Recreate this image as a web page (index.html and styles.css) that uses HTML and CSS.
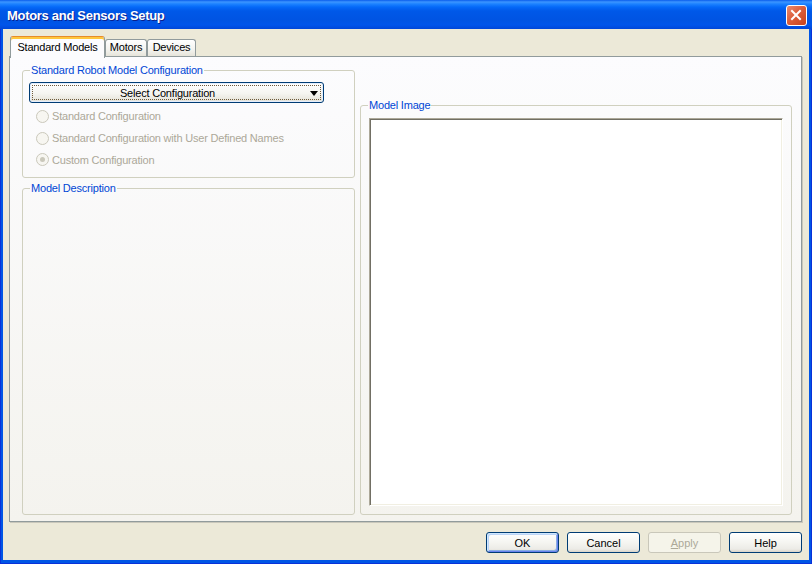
FILE: index.html
```html
<!DOCTYPE html>
<html lang="en">
<head>
  <meta charset="UTF-8" />
  <title>Motors and Sensors Setup</title>
  <link rel="stylesheet" href="styles.css">
</head>
<body>
  <div class="window">
    <div class="titlebar">
      <span class="title">Motors and Sensors Setup</span>
      <button class="close" aria-label="Close">
        <svg width="19" height="19" viewBox="0 0 19 19">
          <path d="M5 5 L13 13 M13 5 L5 13" stroke="#fff" stroke-width="2" stroke-linecap="square" fill="none" />
        </svg>
      </button>
    </div>

    <div class="frame">
      <div class="client">
        <div class="tabs">
          <div class="tab active tab-models">Standard Models</div>
          <div class="tab tab-motors">Motors</div>
          <div class="tab tab-devices">Devices</div>
        </div>

        <div class="panel">
          <div class="left-col">
            <fieldset class="group config">
              <legend>Standard Robot Model Configuration</legend>
              <div class="select">
                <span>Select Configuration</span>
                <span class="arrow"></span>
              </div>
              <div class="radios">
                <div class="radio"><span class="circle"></span>Standard Configuration</div>
                <div class="radio"><span class="circle"></span>Standard Configuration with User Defined Names</div>
                <div class="radio"><span class="circle checked"></span>Custom Configuration</div>
              </div>
            </fieldset>

            <fieldset class="group desc">
              <legend>Model Description</legend>
            </fieldset>
          </div>

          <div class="right-col">
            <fieldset class="group image">
              <legend>Model Image</legend>
              <div class="image-box"></div>
            </fieldset>
          </div>
        </div>

        <div class="buttons">
          <button class="btn default">OK</button>
          <button class="btn">Cancel</button>
          <button class="btn" disabled><u>A</u>pply</button>
          <button class="btn">Help</button>
        </div>
      </div>
    </div>
  </div>
</body>
</html>
```

FILE: styles.css
```css
* {
  box-sizing: border-box;
}
body {
  margin: 0;
  font-family: 'Liberation Sans', Arial, sans-serif;
  font-size: 11px;
  letter-spacing: -0.2px;
  color: #000;
  background: #fff;
}
.window {
  width: 812px;
  height: 564px;
  display: flex;
  flex-direction: column;
}

/* title bar */
.titlebar {
  height: 29px;
  display: flex;
  align-items: center;
  justify-content: space-between;
  padding: 2px 5px 0 7px;
  background: linear-gradient(#0a5dec 0, #3c95ff 2px, #1c82ff 4px, #0569f8 7px, #0058e8 11px, #0054e3 20px, #0055ea 25px, #0047d8 29px);
}
.title {
  color: #fff;
  font-weight: bold;
  font-size: 13px;
  letter-spacing: -0.3px;
  text-shadow: 1px 1px 0 #0a1e8c;
}
.close {
  width: 21px;
  height: 21px;
  padding: 0;
  border: 1px solid #fff;
  border-radius: 3px;
  background: linear-gradient(135deg, #e98a6e 0%, #dc5f3c 45%, #c8421c 100%);
  display: flex;
  align-items: center;
  justify-content: center;
}

/* frame + client area */
.frame {
  flex: 1;
  display: flex;
  padding: 0 3px 4px;
  background: #0055e5;
  box-shadow: inset 1px 0 0 #0831d9, inset -1px 0 0 #0831d9, inset 0 -1px 0 #0831d9;
}
.client {
  flex: 1;
  display: flex;
  flex-direction: column;
  background: #ece9d8;
  padding: 7px 7px 7px 6px;
}

/* tabs */
.tabs {
  display: flex;
  align-items: flex-end;
  height: 20px;
  padding-left: 1px;
  position: relative;
  z-index: 1;
}
.tab {
  height: 17px;
  line-height: 15px;
  text-align: center;
  border: 1px solid #919b9c;
  border-bottom: none;
  border-radius: 3px 3px 0 0;
  background: linear-gradient(#ffffff, #f3f3ef 60%, #e6e4da);
}
.tab.active {
  height: 22px;
  line-height: 20px;
  margin-bottom: -2px;
  background: #fcfcfe;
  border-top-color: #e68b2c;
  box-shadow: inset 0 2px 0 #ffc73c;
}
.tab-models {
  width: 95px;
}
.tab-motors {
  width: 42px;
}
.tab-devices {
  width: 49px;
}

.panel {
  width: 793px;
  height: 466px;
  border: 1px solid #919b9c;
  box-shadow: 1px 1px 0 #c9c7bb;
  background: linear-gradient(#fcfcfe, #f4f3ee);
  display: flex;
  gap: 5px;
  padding: 0 9px 6px 12px;
}
.left-col {
  width: 333px;
  display: flex;
  flex-direction: column;
  padding-top: 7px;
}
.right-col {
  width: 432px;
  padding-top: 42px;
}

/* group boxes */
.group {
  margin: 0;
  min-width: 0;
  border: 1px solid #d0d0bf;
  border-radius: 3px;
  padding: 0 6px;
}
.group legend {
  color: #0046d5;
  line-height: 13px;
  padding: 0 1px;
  margin-left: 1px;
}
.config {
  height: 114px;
  padding-top: 5px;
}
.desc {
  flex: 1;
  margin-top: 4px;
}
.image {
  padding: 6px 8px 8px 8px;
}
.image legend {
  margin-left: -1px;
}
.image-box {
  height: 388px;
  background: #fff;
  border: 1px solid;
  border-color: #aca899 #fff #fff #aca899;
  box-shadow: inset 1px 1px 0 #716f64, inset -1px -1px 0 #f1efe2;
}

/* combo-like button */
.select {
  position: relative;
  width: 295px;
  height: 21px;
  display: flex;
  align-items: center;
  justify-content: center;
  padding-right: 18px;
  border: 1px solid #003c74;
  border-radius: 3px;
  background: linear-gradient(#ffffff, #f5f5f1 55%, #e3e1d7);
  box-shadow: inset 0 0 0 1px #e4eefc;
}
.select::after {
  content: "";
  position: absolute;
  inset: 2px;
  border: 1px dotted #6e5a3c;
}
.arrow {
  position: absolute;
  right: 5px;
  top: 8px;
  width: 0;
  height: 0;
  border-left: 4.5px solid transparent;
  border-right: 4.5px solid transparent;
  border-top: 5px solid #000;
}

.radios {
  margin-top: 2px;
}
.radio {
  height: 22px;
  display: flex;
  align-items: center;
  gap: 3px;
  padding-left: 7px;
  color: #aca899;
}
.radio:last-child {
  height: 21px;
}
.circle {
  width: 13px;
  height: 13px;
  border: 1px solid #cac8bb;
  border-radius: 50%;
  background: #f7f6f1;
  display: flex;
  align-items: center;
  justify-content: center;
}
.circle.checked::after {
  content: "";
  width: 5px;
  height: 5px;
  border-radius: 50%;
  background: #cac8bb;
}

/* dialog buttons */
.buttons {
  display: flex;
  justify-content: flex-end;
  gap: 8px;
  margin-top: 10px;
}
.btn {
  width: 73px;
  height: 21px;
  padding: 0;
  font: inherit;
  color: #000;
  border: 1px solid #003c74;
  border-radius: 3px;
  background: linear-gradient(#ffffff, #f5f5f1 50%, #ecebe6 85%, #d8d3c8);
}
.btn.default {
  box-shadow: inset 1px 1px 0 #cee7ff, inset -1px -1px 0 #6982ee, inset 2px 2px 0 #bcd4f6, inset -2px -2px 0 #89ade4;
}
.btn:disabled {
  color: #aca899;
  border-color: #c9c7ba;
  background: #f5f4ea;
}
```
